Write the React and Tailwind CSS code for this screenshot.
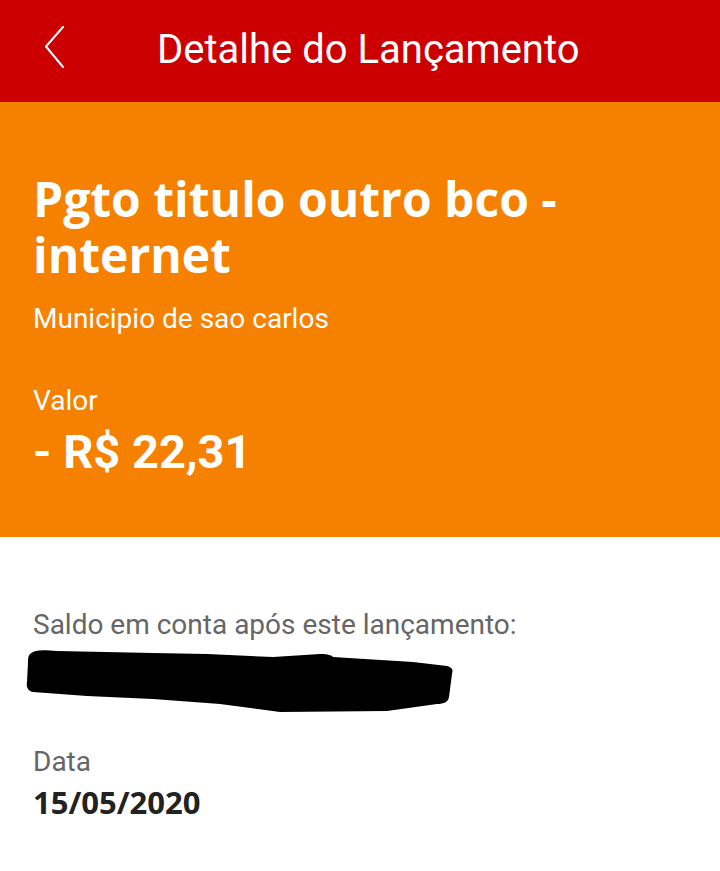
import React from 'react';

const roboto = { fontFamily: 'Roboto, "Noto Sans", sans-serif' };

export default function App() {
    return (
        <div className="w-[720px] h-[871px] bg-white flex flex-col" style={roboto}>
            <header className="h-[102px] bg-[#cc0000] flex items-center shrink-0">
                <div className="w-[157px] flex items-center pl-[44px]">
                    <svg width="22" height="50" viewBox="0 0 22 50" fill="none">
                        <path d="M19 1 L2 20.5 L19 41" stroke="#ffffff" strokeWidth="2" strokeLinecap="round" strokeLinejoin="round" />
                    </svg>
                </div>
                <h1 className="text-white text-[40px] leading-[40px] font-normal -mt-[3px]">Detalhe do Lançamento</h1>
            </header>

            <section className="h-[435px] bg-[#f68100] px-[33px] pt-[69px] shrink-0">
                <h2 className="text-white font-bold text-[48px] leading-[56px] font-['Open_Sans',sans-serif]">
                    Pgto titulo outro bco - internet
                </h2>
                <p className="text-white text-[28px] leading-[32px] mt-[20px]">Municipio de sao carlos</p>
                <p className="text-white text-[28px] leading-[32px] mt-[50px]">Valor</p>
                <p className="text-white font-bold text-[47px] leading-[56px] mt-[7px]">- R$ 22,31</p>
            </section>

            <section className="px-[33px] pt-[72px]">
                <p className="text-[#666666] text-[28px] leading-[32px]">Saldo em conta após este lançamento:</p>
                <div className="-ml-[13px] -mt-[2px] h-[80px]">
                    <svg width="440" height="80" viewBox="0 0 440 80">
                        <path d="M10 15 C15 10 25 11 37 12 L133 14 L187 15 L253 18 L300 15 C310 15 312 17 313 18 L393 23 L427 27 C433 29 433 31 432 35 L429 58 C428 63 424 65 417 65 L367 72 L260 73 L200 65 L133 60 L67 57 L13 53 C8 52 6 48 7 43 L8 23 C8 18 9 16 10 15 Z" fill="#000000" />
                    </svg>
                </div>
                <p className="text-[#666666] text-[28px] leading-[32px] mt-[27px]">Data</p>
                <p className="text-[#222222] font-bold text-[31px] leading-[40px] mt-[4px] font-['Open_Sans',sans-serif]">15/05/2020</p>
            </section>
        </div>
    );
}
